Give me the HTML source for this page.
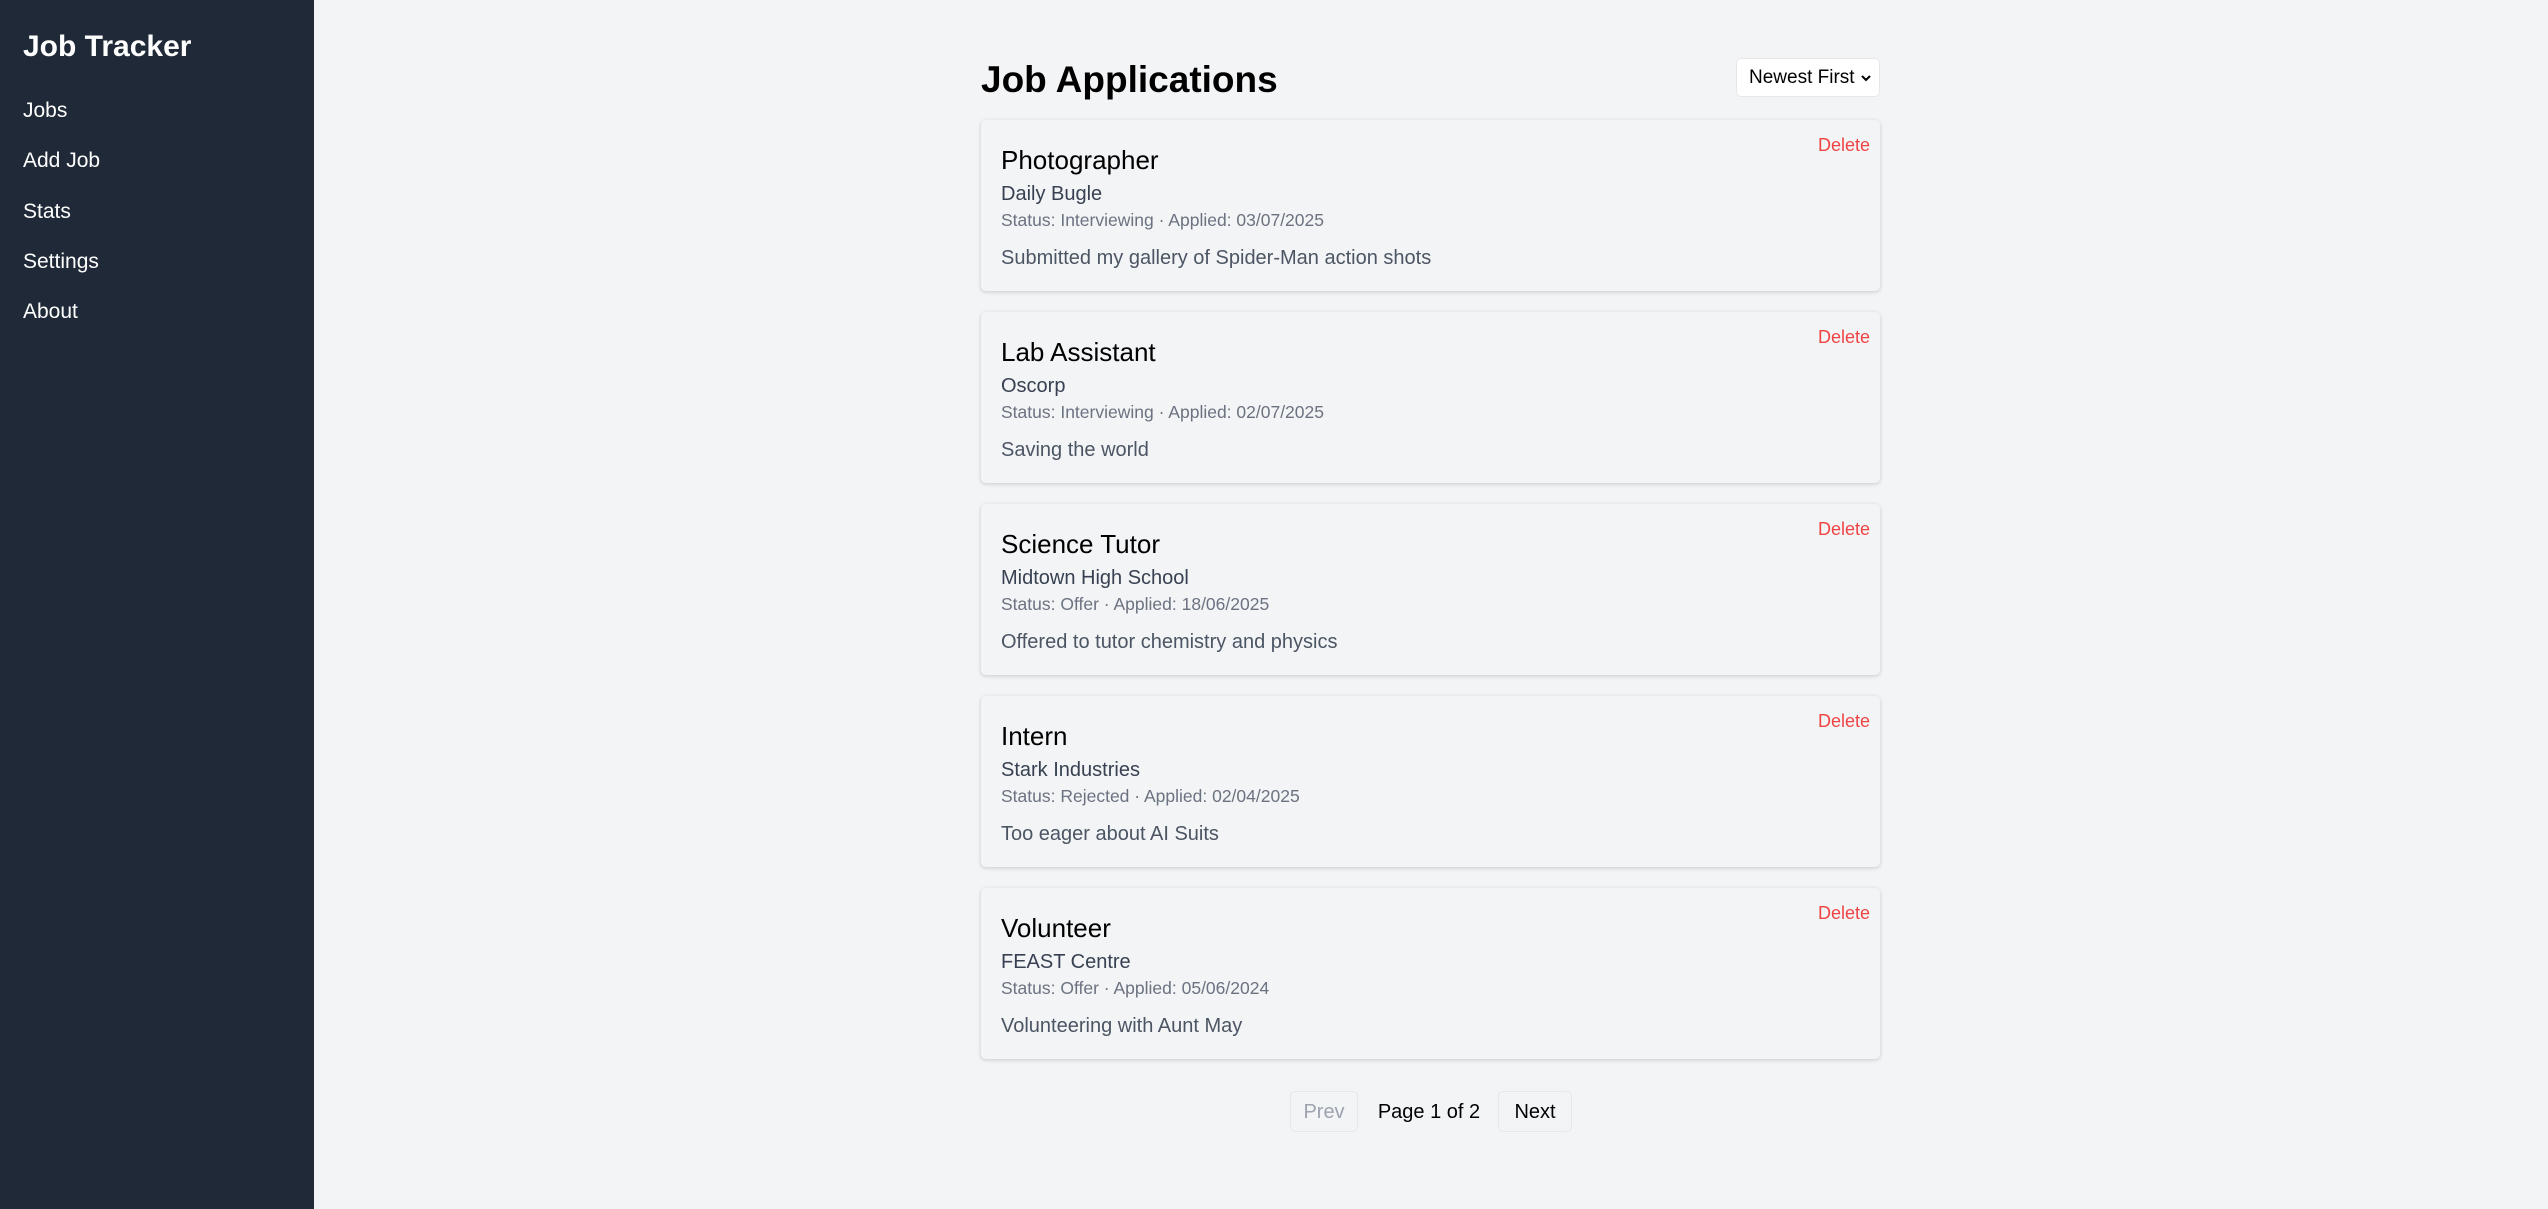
<!DOCTYPE html>
<html><head><meta charset="utf-8"><style>
*{box-sizing:border-box;margin:0;padding:0}
html,body{width:2548px;height:1209px;overflow:hidden;background:#f3f4f6;font-family:"Liberation Sans","DejaVu Sans",sans-serif}
.side{position:absolute;left:0;top:0;width:314px;height:1209px;background:#1f2937;color:#fff}
.side h1{position:absolute;left:23px;top:27px;font-size:30px;font-weight:bold;line-height:40px}
.side a{position:absolute;left:23px;font-size:21px;color:#fff;text-decoration:none;line-height:26px}
.h{position:absolute;left:981px;top:57px;font-size:37px;font-weight:bold;line-height:46px;color:#000}
.sel{position:absolute;left:1736px;top:58px;width:144px;height:39px;background:#fff;border:1px solid #e5e7eb;border-radius:5px;font-size:19px;line-height:37px;padding-left:12px;color:#000}
.sel svg{position:absolute;right:8px;top:16px}
.card{position:absolute;left:981px;width:899px;height:171px;background:#f3f4f6;border-radius:5px;box-shadow:0 1px 4px rgba(0,0,0,.18)}
.card .t{position:absolute;left:20px;top:24px;font-size:26px;line-height:32px;color:#000}
.card .c{position:absolute;left:20px;top:62px;font-size:20px;line-height:24px;color:#374151}
.card .s{position:absolute;left:20px;top:89px;font-size:17.5px;line-height:22px;color:#6b7280}
.card .n{position:absolute;left:20px;top:126px;font-size:20px;line-height:24px;color:#4b5563}
.card .d{position:absolute;right:10px;top:14px;font-size:18px;line-height:22px;color:#ef4444}
.btn{position:absolute;top:1091px;height:41px;border:1px solid #e5e7eb;border-radius:5px;font-size:20px;line-height:41px;text-align:center}
</style></head><body>
<div class="side"><h1>Job Tracker</h1>
<a style="top:98px">Jobs</a><a style="top:148px">Add Job</a><a style="top:199px">Stats</a><a style="top:249px">Settings</a><a style="top:299px">About</a></div>
<div class="h">Job Applications</div>
<div class="sel">Newest First<svg width="10" height="7" viewBox="0 0 10 7"><path d="M1 1l4 4 4-4" fill="none" stroke="#000" stroke-width="2"/></svg></div>
<div class="card" style="top:120px"><div class="t">Photographer</div><div class="c">Daily Bugle</div><div class="s">Status: Interviewing · Applied: 03/07/2025</div><div class="n">Submitted my gallery of Spider-Man action shots</div><div class="d">Delete</div></div>
<div class="card" style="top:312px"><div class="t">Lab Assistant</div><div class="c">Oscorp</div><div class="s">Status: Interviewing · Applied: 02/07/2025</div><div class="n">Saving the world</div><div class="d">Delete</div></div>
<div class="card" style="top:504px"><div class="t">Science Tutor</div><div class="c">Midtown High School</div><div class="s">Status: Offer · Applied: 18/06/2025</div><div class="n">Offered to tutor chemistry and physics</div><div class="d">Delete</div></div>
<div class="card" style="top:696px"><div class="t">Intern</div><div class="c">Stark Industries</div><div class="s">Status: Rejected · Applied: 02/04/2025</div><div class="n">Too eager about AI Suits</div><div class="d">Delete</div></div>
<div class="card" style="top:888px"><div class="t">Volunteer</div><div class="c">FEAST Centre</div><div class="s">Status: Offer · Applied: 05/06/2024</div><div class="n">Volunteering with Aunt May</div><div class="d">Delete</div></div>
<div class="btn" style="left:1290px;width:68px;color:#9ca3af">Prev</div>
<div style="position:absolute;left:1370px;top:1092px;width:118px;font-size:20px;line-height:41px;text-align:center;color:#000">Page 1 of 2</div>
<div class="btn" style="left:1498px;width:74px;color:#000">Next</div>
</body></html>
